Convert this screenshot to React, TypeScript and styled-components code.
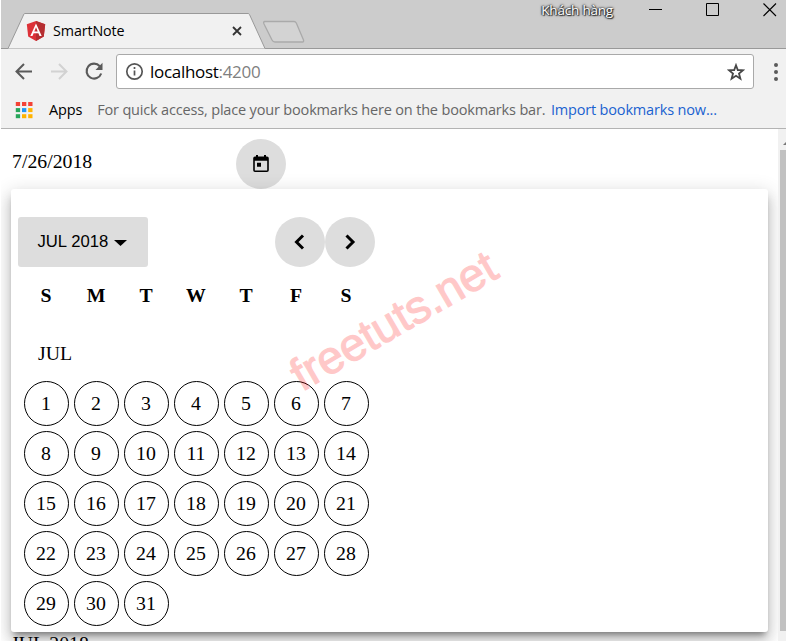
import React from "react";
import styled, { createGlobalStyle } from "styled-components";

const GlobalStyle = createGlobalStyle`
  * { box-sizing: border-box; }
  html, body { margin: 0; padding: 0; overflow: hidden; background: #fff; }
  svg { display: block; flex: none; }
  button { border: 0; padding: 0; margin: 0; color: #000; }
`;

const ui = `"Open Sans", "Noto Sans", sans-serif`;

const Window = styled.div`
  width: 786px;
  height: 641px;
  padding-left: 1px;
  display: flex;
  flex-direction: column;
  overflow: hidden;
  font-family: "Liberation Serif", serif;
  font-size: 19.8px;
  color: #000;
`;

const TitleBar = styled.header`
  height: 49px;
  flex: none;
  display: flex;
  background: #ccc;
  border-bottom: 1px solid #999;
`;

const Tab = styled.div`
  position: relative;
  width: 258px;
  height: 36px;
  margin: 13px 0 0 7px;
  padding: 0 24px 0 18px;
  display: flex;
  align-items: center;
`;

const TabShape = styled.svg`
  position: absolute;
  left: 0;
  top: 0;
`;

const TabTitle = styled.span`
  position: relative;
  flex: 1;
  margin-left: 7px;
  font: 14.3px/20px ${ui};
  letter-spacing: -0.1px;
`;

const Above = styled.span`
  position: relative;
  display: flex;
`;

const NewTab = styled.svg`
  margin: 20px 0 0 -5px;
`;

const WindowControls = styled.div`
  margin-left: auto;
  height: 20px;
  display: flex;
  align-items: center;
  padding-right: 9px;
`;

const User = styled.span`
  margin: -1px 36px 0 0;
  font: 13.5px/18px ${ui};
  letter-spacing: -0.2px;
  color: #fff;
  text-shadow: 0 0 2px #222, 1px 1px 1px #333, -1px 0 1px #555, 0 0 3px #555;
`;

const Controls = styled.div`
  display: flex;
  gap: 43px;
`;

const AddressRow = styled.div`
  height: 45px;
  flex: none;
  display: flex;
  align-items: center;
  padding: 0 0 0 12px;
  background: #f1f1f1;
`;

const NavIcons = styled.div`
  display: flex;
  gap: 13px;
  width: 103px;
`;

const Omnibox = styled.div`
  width: 638px;
  height: 35px;
  display: flex;
  align-items: center;
  padding: 0 8px;
  border: 1px solid #a9a9a9;
  border-radius: 3px;
  background: #fff;
`;

const Url = styled.span`
  flex: 1;
  margin-left: 6px;
  font: 17px/24px ${ui};
  letter-spacing: -0.3px;
  span { color: #808080; }
`;

const MenuDots = styled.div`
  display: grid;
  gap: 3px;
  margin-left: 20px;
  i { width: 4px; height: 4px; border-radius: 50%; background: #5a5a5a; }
`;

const Bookmarks = styled.nav`
  height: 35px;
  flex: none;
  display: flex;
  align-items: center;
  padding: 0 0 3px 14px;
  background: #f1f1f1;
  border-bottom: 1px solid #b3b3b3;
  font: 14.5px/20px ${ui};
  letter-spacing: -0.17px;
  white-space: nowrap;
`;

const AppsGrid = styled.svg`
  margin-right: 16px;
`;

const Hint = styled.span`
  margin: 0 5.5px 0 15px;
  color: #666;
`;

const Import = styled.a`
  color: #1a62d0;
`;

const Viewport = styled.main`
  height: 512px;
  display: flex;
  overflow: hidden;
`;

const Page = styled.div`
  width: 777px;
  overflow: hidden;
  padding: 10px 10px 0;
`;

const DateRow = styled.div`
  display: flex;
  height: 50px;
`;

const DateText = styled.span`
  width: 225px;
  padding: 11px 0 0 1px;
  line-height: 23px;
`;

const RoundButton = styled.button`
  width: 50px;
  height: 50px;
  border-radius: 50%;
  display: flex;
  align-items: center;
  justify-content: center;
  background: #ddd;
`;

const Panel = styled.section`
  position: relative;
  width: 757px;
  height: 443px;
  padding: 28px 7px 0;
  border-radius: 3px;
  background: #fff;
  box-shadow: 0 6px 6px -4px rgba(0, 0, 0, 0.2), 0 10px 13px 1px rgba(0, 0, 0, 0.14),
    0 4px 18px 3px rgba(0, 0, 0, 0.12), 0 5px 6px -3px rgba(0, 0, 0, 0.25);
`;

const PanelHeader = styled.div`
  display: flex;
  width: 357px;
  justify-content: space-between;
`;

const PeriodButton = styled.button`
  width: 130px;
  height: 50px;
  padding: 0 20px 0 19.5px;
  display: flex;
  align-items: center;
  gap: 6px;
  border-radius: 3px;
  background: #ddd;
  font: 16.67px/20px "Liberation Sans", sans-serif;
  white-space: nowrap;
  svg { margin-top: 2px; }
`;

const Steppers = styled.div`
  display: flex;
`;

const Weekdays = styled.div`
  display: grid;
  grid-template-columns: repeat(7, 50px);
  margin: 17px 0 0 3px;
  font-weight: bold;
  line-height: 23px;
  text-align: center;
`;

const MonthName = styled.div`
  margin: 35px 0 0 20px;
  line-height: 23px;
`;

const Days = styled.div`
  display: grid;
  grid-template-columns: repeat(7, 45px);
  gap: 5px;
  margin: 16px 0 0 6px;
`;

const Day = styled.div`
  height: 45px;
  padding-right: 1px;
  border: 1px solid #000;
  border-radius: 50%;
  text-align: center;
  line-height: 43px;
`;

const Watermark = styled.span`
  position: absolute;
  left: 291px;
  top: 161px;
  font: 46px/52px "Liberation Sans", sans-serif;
  color: #f00;
  -webkit-text-stroke: 1.2px #f00;
  opacity: 0.21;
  transform: rotate(-30.2deg);
  transform-origin: 0 42px;
  white-space: nowrap;
  pointer-events: none;
`;

const Below = styled.div`
  line-height: 23px;
`;

const ScrollTrack = styled.div`
  width: 8px;
  padding: 21px 0 0 2px;
  background: #f1f1f1;
  position: relative;
`;

const ScrollThumb = styled.div`
  width: 6px;
  height: 481px;
  background: #c1c1c1;
`;

const ScrollArrow = styled.svg`
  position: absolute;
  left: 5px;
  top: 12px;
`;

const apps = ["#f44336", "#f44336", "#f44336", "#27a65a", "#2196f3", "#ffb300", "#27a65a", "#ffb300", "#ffb300"];
const week = ["S", "M", "T", "W", "T", "F", "S"];
const days = Array.from({ length: 31 }, (_, i) => i + 1);

export default function App() {
  return (
    <Window>
      <GlobalStyle />
      <TitleBar>
        <Tab>
          <TabShape width="258" height="36">
            <path d="M0 35.5 L16 .9 Q16.3 .5 17 .5 H240 Q241 .5 241.5 1.5 L257 35.5" fill="#f1f1f1" stroke="#999" />
          </TabShape>
          <Above>
            <svg width="20" height="20" viewBox="0 0 20 20">
              <path d="M10 0 19.2 3.3 17.8 15.5 10 20 2.2 15.5.8 3.3Z" fill="#dd3138" />
              <path d="M10 0 19.2 3.3 17.8 15.5 10 20Z" fill="#b52e31" />
              <path d="M10 2.4 4.3 15h2.2l1.1-2.8h4.8l1.1 2.8h2.2ZM10 6.3l1.7 4.1H8.3Z" fill="#fff" fillRule="evenodd" />
            </svg>
          </Above>
          <TabTitle>SmartNote</TabTitle>
          <Above>
            <svg width="10" height="10" viewBox="0 0 10 10" stroke="#333" strokeWidth="1.8">
              <path d="M1 1 9 9M9 1 1 9" />
            </svg>
          </Above>
        </Tab>
        <NewTab width="46" height="24" viewBox="0 0 46 24">
          <path d="M4 1.5H33Q34.5 1.5 35.3 3L42.5 20Q43 22 41.5 22H14Q12 22 11 20L3.5 5Q1.5 1.5 4 1.5Z" fill="#d3d3d3" stroke="#aaa" strokeWidth="1.3" />
        </NewTab>
        <WindowControls>
          <User>Khách hàng</User>
          <Controls>
            <svg width="14" height="14"><path d="M0 6.5h13" stroke="#000" /></svg>
            <svg width="14" height="14"><path d="M.5.5h12v12H.5V.5Z" fill="none" stroke="#000" /></svg>
            <svg width="14" height="14"><path d="M.5.5l12.5 12.5M13 .5.5 13" stroke="#000" strokeWidth="1.1" /></svg>
          </Controls>
        </WindowControls>
      </TitleBar>
      <AddressRow>
        <NavIcons>
          <svg width="22" height="22" viewBox="0 0 22 22" fill="none" stroke="#5a5a5a" strokeWidth="2"><path d="M19 10.500H4M11 3 3.500 10.500 11 18" /></svg>
          <svg width="22" height="22" viewBox="0 0 22 22" fill="none" stroke="#d2d2d2" strokeWidth="2"><path d="M3 10.500H18M11 3 18.500 10.500 11 18" /></svg>
          <svg width="22" height="22" viewBox="0 0 22 22" fill="none" stroke="#5a5a5a" strokeWidth="2.1">
            <path d="M18.2 12.500A7.500 7.500 0 1 1 16.800 5.200" /><path d="M19.500 1.800V9H12.500Z" fill="#5a5a5a" stroke="none" />
          </svg>
        </NavIcons>
        <Omnibox>
          <svg width="19" height="19" viewBox="0 0 19 19" fill="none" stroke="#555" strokeWidth="1.7">
            <circle cx="9.5" cy="9.5" r="7.7" /><path d="M9.5 8.5v5M9.5 5v2" />
          </svg>
          <Url>localhost<span>:4200</span></Url>
          <svg width="18" height="18" viewBox="0 0 18 18" fill="none" stroke="#484848" strokeWidth="1.8">
            <path d="M9 2.2 10.8 7 16 7.2 12 10.5 13.4 15.7 9 12.8 4.6 15.7 6 10.5 2 7.2 7.2 7Z" />
          </svg>
        </Omnibox>
        <MenuDots><i /><i /><i /></MenuDots>
      </AddressRow>
      <Bookmarks>
        <AppsGrid width="18" height="18">
          {apps.map((c, i) => (
            <rect key={i} x={0.8 + (i % 3) * 6.2} y={1 + Math.floor(i / 3) * 6.1} width="4.3" height="4" fill={c} />
          ))}
        </AppsGrid>
        <span>Apps</span>
        <Hint>For quick access, place your bookmarks here on the bookmarks bar.</Hint>
        <Import>Import bookmarks now...</Import>
      </Bookmarks>
      <Viewport>
        <Page>
          <DateRow>
            <DateText>7/26/2018</DateText>
            <RoundButton aria-label="Open calendar">
              <svg width="16" height="18" viewBox="0 0 16 18">
                <path fillRule="evenodd" d="M3 0h2v1.500h6V0h2v1.500h1q1.800 0 1.800 1.800v11.900q0 1.800-1.800 1.800H2Q.2 17 .2 15.200V3.300Q.2 1.500 2 1.500h1ZM1.800 5.800v9.600h12.400V5.800ZM4 7.800h4v4H4Z" />
              </svg>
            </RoundButton>
          </DateRow>
          <Panel>
            <PanelHeader>
              <PeriodButton>
                JUL 2018
                <svg width="13" height="6"><path d="M0 0h13L6.500 6Z" /></svg>
              </PeriodButton>
              <Steppers>
                <RoundButton aria-label="Previous month">
                  <svg width="12" height="16" viewBox="0 0 12 16" fill="none" stroke="#000" strokeWidth="3"><path d="M9 1.500 2.500 8l6.500 6.500" /></svg>
                </RoundButton>
                <RoundButton aria-label="Next month">
                  <svg width="12" height="16" viewBox="0 0 12 16" fill="none" stroke="#000" strokeWidth="3"><path d="M2.500 1.500 9 8l-6.500 6.500" /></svg>
                </RoundButton>
              </Steppers>
            </PanelHeader>
            <Weekdays>{week.map((d, i) => <span key={i}>{d}</span>)}</Weekdays>
            <MonthName>JUL</MonthName>
            <Days>{days.map((d) => <Day key={d}>{d}</Day>)}</Days>
            <Watermark>freetuts.net</Watermark>
          </Panel>
          <Below>JUL 2018</Below>
        </Page>
        <ScrollTrack>
          <ScrollArrow width="8" height="4"><path d="M0 4 4 0 8 4Z" fill="#777" /></ScrollArrow>
          <ScrollThumb />
        </ScrollTrack>
      </Viewport>
    </Window>
  );
}
